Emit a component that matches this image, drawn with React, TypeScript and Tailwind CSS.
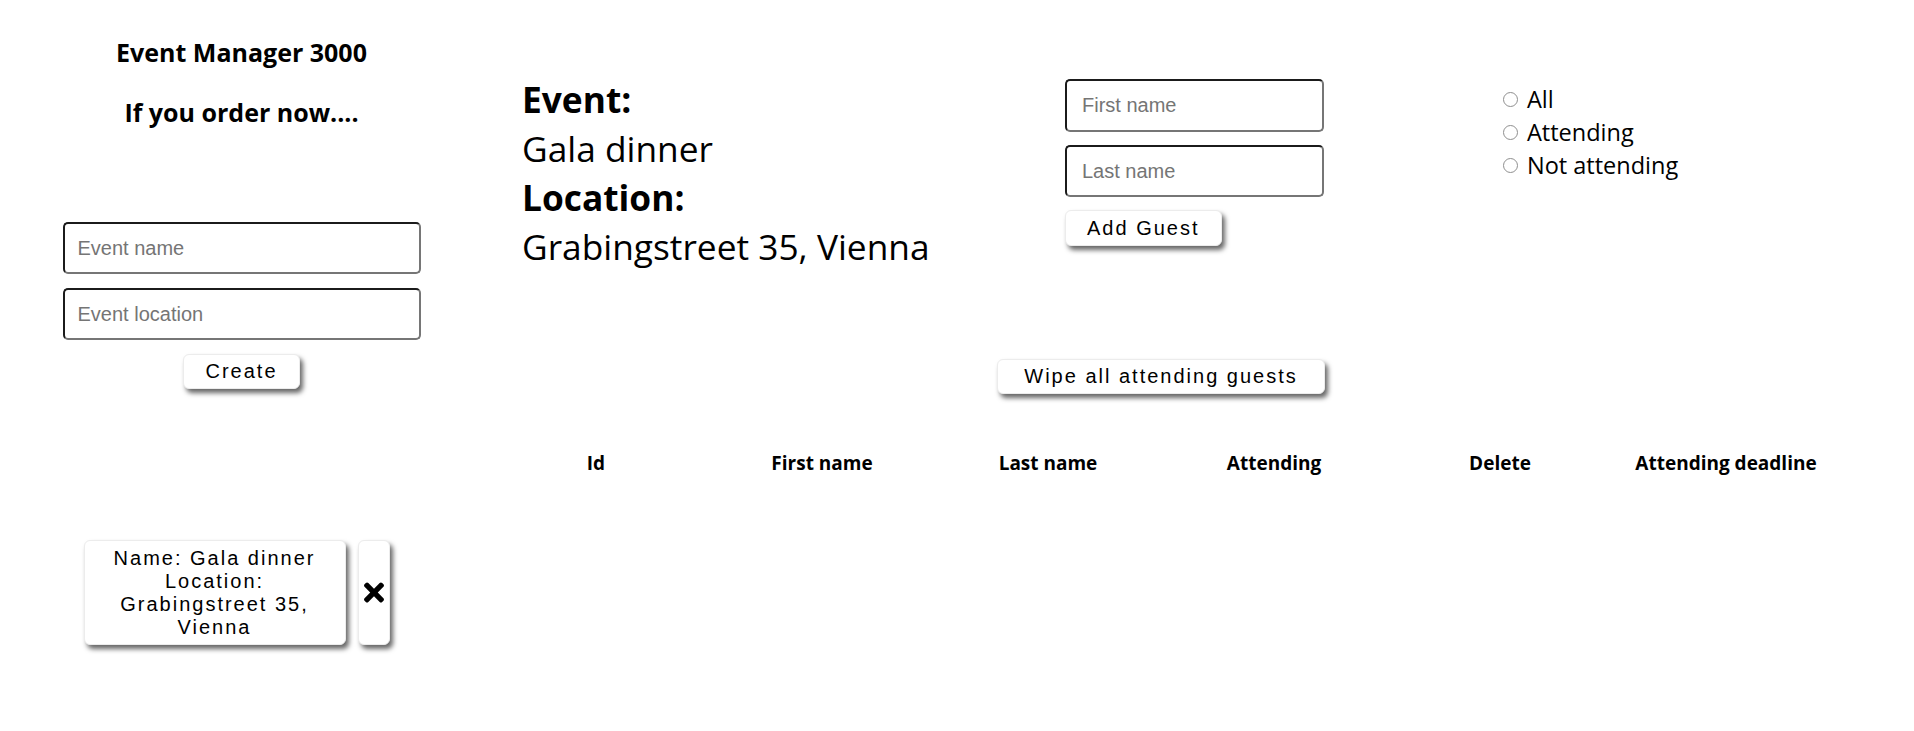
import React from 'react';
import { FaTimes } from 'react-icons/fa';

const btn =
  "bg-white rounded-[6px] border border-[#ececec] shadow-[3px_4px_5px_rgba(0,0,0,0.6)] font-['Liberation_Sans',Arial,sans-serif] text-[20px] tracking-[2px] text-black leading-[23px]";

const field =
  "h-[52px] rounded-[5px] border-2 border-t-[#1b1b1b] border-l-[#1b1b1b] border-b-[#767676] border-r-[#767676] bg-white font-['Liberation_Sans',Arial,sans-serif] text-[20px] placeholder:text-[#757575] outline-none";

const columns = ['Id', 'First name', 'Last name', 'Attending', 'Delete', 'Attending deadline'];

export default function App() {
  return (
    <div className="flex w-[1914px] h-[731px] bg-white text-black font-['Open_Sans',sans-serif]">
      {/* left: create events */}
      <div className="w-[483px] flex flex-col items-center">
        <h3 className="mt-[37px] text-[25px] leading-[30px] font-bold">Event Manager 3000</h3>
        <h3 className="mt-[30px] text-[25px] leading-[30px] font-bold">If you order now....</h3>
        <input className={`${field} mt-[95px] w-[358px] pl-[13px]`} placeholder="Event name" />
        <input className={`${field} mt-[14px] w-[358px] pl-[13px]`} placeholder="Event location" />
        <button className={`${btn} mt-[14px] h-[35px] px-[21px]`}>Create</button>

        <div className="mt-[151px] flex gap-[12px] ml-[-10px]">
          <div className={`${btn} w-[262px] h-[105px] px-[20px] py-[6px] text-center flex items-center justify-center`}>
            <span>
              Name: Gala dinner
              <br />
              Location: Grabingstreet 35, Vienna
            </span>
          </div>
          <button className={`${btn} w-[32px] h-[105px] flex items-center justify-center`}>
            <FaTimes className="w-[20px] h-[29px]" />
          </button>
        </div>
      </div>

      {/* right: event details, guests */}
      <div className="w-[1356px] flex flex-col">
        <div className="flex items-start pt-[75px]">
          <div className="w-[582px] pl-[39px] text-[35.3px] leading-[49px]">
            <div className="font-bold">Event:</div>
            <div>Gala dinner</div>
            <div className="font-bold">Location:</div>
            <div>Grabingstreet 35, Vienna</div>
          </div>

          <div className="mt-[4px] w-[259px] flex flex-col items-start">
            <input className={`${field} w-[259px] h-[53px] pl-[15px]`} placeholder="First name" />
            <input className={`${field} mt-[13px] w-[259px] pl-[15px]`} placeholder="Last name" />
            <button className={`${btn} mt-[13px] h-[36px] px-[21px]`}>Add Guest</button>
          </div>

          <div className="ml-[179px] mt-[8px] flex flex-col text-[23.5px] leading-[33px]">
            {['All', 'Attending', 'Not attending'].map((label) => (
              <label key={label} className="flex items-center">
                <input
                  type="radio"
                  name="filter"
                  className="appearance-none w-[15px] h-[15px] rounded-full border border-[#8f8f8f] bg-white mr-[9px]"
                />
                {label}
              </label>
            ))}
          </div>
        </div>

        <div className="flex justify-center mt-[88px]">
          <button className={`${btn} h-[35px] px-[26px] tracking-[2.3px]`}>Wipe all attending guests</button>
        </div>

        <div className="mt-[57px] grid grid-cols-6 text-[19px] leading-[25px] font-bold text-center">
          {columns.map((c) => (
            <div key={c}>{c}</div>
          ))}
        </div>
      </div>
    </div>
  );
}
